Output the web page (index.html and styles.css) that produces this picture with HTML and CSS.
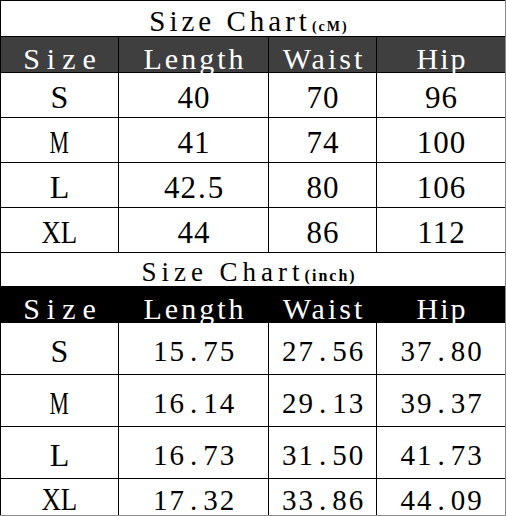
FILE: index.html
```html
<!DOCTYPE html>
<html lang="en">
<head>
<meta charset="utf-8">
<title>Size Chart</title>
<link rel="stylesheet" href="styles.css">
</head>
<body>
<div class="sheet">
  <section class="chart chart-cm">
    <div class="title">Size Chart<span class="unit">(cM)</span></div>
    <div class="head head-size">Size</div>
    <div class="head">Length</div>
    <div class="head">Waist</div>
    <div class="head head-hip">Hip</div>

    <div class="lbl"><span class="glyph">S</span></div>
    <div class="num">40</div>
    <div class="num">70</div>
    <div class="num">96</div>

    <div class="lbl"><span class="glyph m">M</span></div>
    <div class="num">41</div>
    <div class="num">74</div>
    <div class="num">100</div>

    <div class="lbl"><span class="glyph">L</span></div>
    <div class="num">42<span class="dot">.</span>5</div>
    <div class="num">80</div>
    <div class="num">106</div>

    <div class="lbl"><span class="glyph xl">XL</span></div>
    <div class="num">44</div>
    <div class="num">86</div>
    <div class="num">112</div>
  </section>

  <section class="chart chart-inch">
    <div class="title">Size Chart<span class="unit">(inch)</span></div>
    <div class="head head-size">Size</div>
    <div class="head">Length</div>
    <div class="head">Waist</div>
    <div class="head head-hip">Hip</div>

    <div class="lbl"><span class="glyph">S</span></div>
    <div class="num">15<span class="dot">.</span>75</div>
    <div class="num">27<span class="dot">.</span>56</div>
    <div class="num">37<span class="dot">.</span>80</div>

    <div class="lbl"><span class="glyph m">M</span></div>
    <div class="num">16<span class="dot">.</span>14</div>
    <div class="num">29<span class="dot">.</span>13</div>
    <div class="num">39<span class="dot">.</span>37</div>

    <div class="lbl"><span class="glyph">L</span></div>
    <div class="num">16<span class="dot">.</span>73</div>
    <div class="num">31<span class="dot">.</span>50</div>
    <div class="num">41<span class="dot">.</span>73</div>

    <div class="lbl last"><span class="glyph xl">XL</span></div>
    <div class="num last">17<span class="dot">.</span>32</div>
    <div class="num last">33<span class="dot">.</span>86</div>
    <div class="num last">44<span class="dot">.</span>09</div>
  </section>
</div>
</body>
</html>
```

FILE: styles.css
```css
html, body {
  margin: 0;
  padding: 0;
  background: #fff;
}

body {
  font-family: "Liberation Serif", "Times New Roman", serif;
  color: #000;
}

.sheet {
  box-sizing: border-box;
  width: 506px;
  height: 516px;
  padding-left: 1px;
  background: #000;
  border-right: 1px solid #8a8a8a;
  border-bottom: 1px solid #8a8a8a;
  overflow: hidden;
}

.chart {
  display: grid;
  grid-template-columns: 117px 149px 107px 128px;
  gap: 1px;
  background: #000;
}

.chart-cm {
  grid-template-rows: 35px 35px 44px 44px 44px 44px;
  padding: 1px 0;
}

.chart-inch {
  grid-template-rows: 33px 35px 51px 51px 51px 36px;
}

.chart > div {
  box-sizing: border-box;
  background: #fff;
  text-align: center;
  line-height: 1;
  white-space: nowrap;
}

/* titles */
.title {
  grid-column: 1 / -1;
  padding-right: 8px;
}

.chart-cm .title {
  font-size: 29px;
  letter-spacing: 4px;
  padding-top: 6px;
}

.chart-inch .title {
  font-size: 27px;
  letter-spacing: 5px;
  padding-top: 6px;
}

.unit {
  font-weight: bold;
}

.chart-cm .unit {
  font-size: 14px;
  letter-spacing: 2px;
  margin-left: 1px;
}

.chart-inch .unit {
  font-size: 16px;
  letter-spacing: 2px;
}

/* header band */
.chart > .head {
  color: #fff;
  font-size: 30px;
  letter-spacing: 3px;
  text-indent: 3px;
  padding-top: 7px;
}

.chart-cm > .head {
  background: #3f3f3f;
}

.chart-inch > .head {
  background: #000;
}

.chart > .head-size {
  letter-spacing: 7px;
  text-indent: 7px;
}

.chart > .head-hip {
  letter-spacing: 2px;
  text-indent: 2px;
}

/* size labels */
.lbl {
  font-size: 32px;
}

.chart-cm .lbl {
  padding-top: 8px;
}

.chart-inch .lbl {
  padding-top: 12px;
}

.chart-inch .lbl.last {
  padding-top: 4px;
}

.glyph {
  display: inline-block;
}

.glyph.m {
  transform: scaleX(0.68);
}

.glyph.xl {
  transform: scaleX(0.84);
}

/* numbers */
.chart-cm .num {
  font-size: 31px;
  letter-spacing: 1px;
  text-indent: 1px;
  padding-top: 9px;
}

.chart-cm .dot {
  margin: 0 1px;
}

.chart-inch .num {
  font-size: 29px;
  letter-spacing: 2px;
  text-indent: 2px;
  padding-top: 14px;
}

.chart-inch .num.last {
  padding-top: 7px;
}

.chart-inch .dot {
  margin: 0 4px;
}
```
